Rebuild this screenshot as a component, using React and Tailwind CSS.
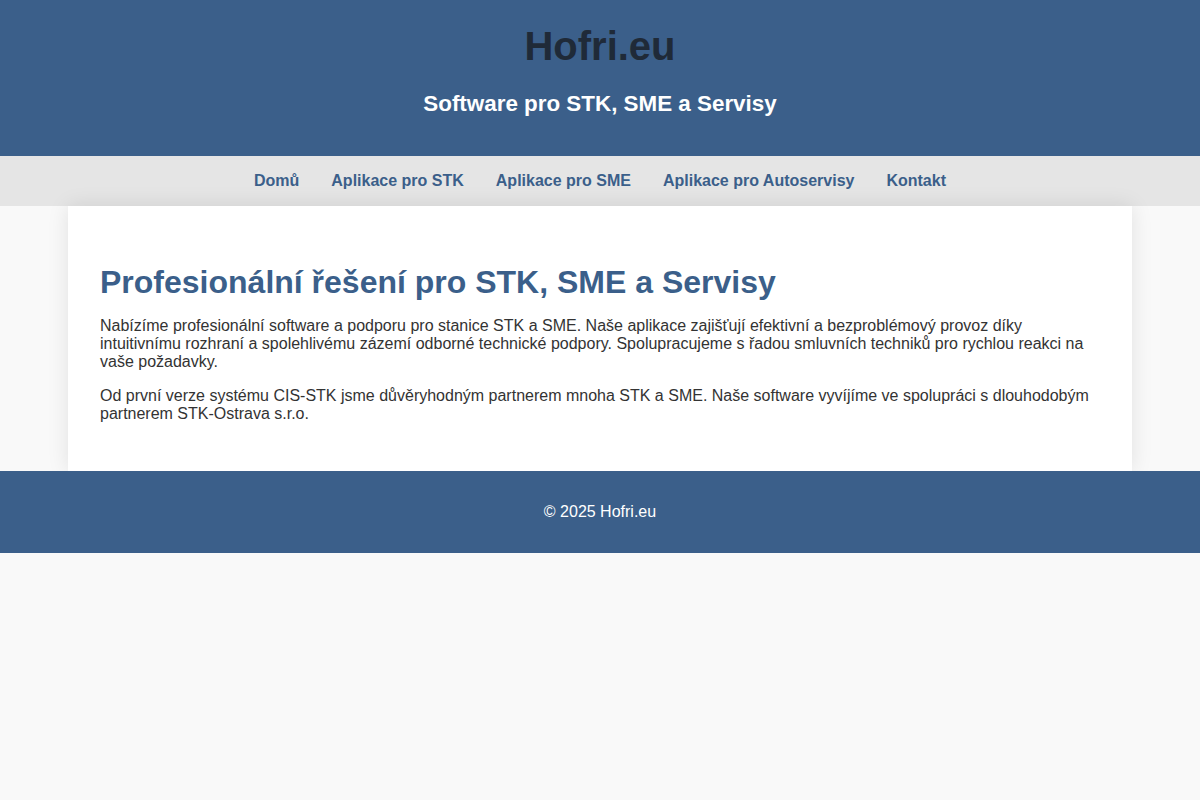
import React from 'react';

const navLinks = ['Domů', 'Aplikace pro STK', 'Aplikace pro SME', 'Aplikace pro Autoservisy', 'Kontakt'];

const App = () => {
  return (
    <div className="min-h-screen bg-[#f9f9f9] text-[#333] font-['Liberation_Sans',Arial,sans-serif]">
      <header className="bg-[#3b5f8a] text-center pt-[22px] pb-[39px]">
        <h1 className="text-[40px] font-bold leading-[48px] text-[#1f2a38]">Hofri.eu</h1>
        <h2 className="mt-[21px] text-[22.4px] font-bold leading-[26px] text-white">Software pro STK, SME a Servisy</h2>
      </header>

      <nav className="bg-[#e5e5e5] h-[50px] flex items-center justify-center">
        {navLinks.map((link) => (
          <a key={link} href="#" className="px-4 text-base font-bold text-[#3b5f8a]">
            {link}
          </a>
        ))}
      </nav>

      <main className="relative max-w-[1064px] mx-auto bg-white px-8 pt-[58px] pb-8 shadow-[0_0_20px_rgba(0,0,0,0.1)]">
        <h2 className="text-[32px] font-bold leading-[37px] text-[#3b5f8a] mb-4">
          Profesionální řešení pro STK, SME a Servisy
        </h2>
        <p className="text-base leading-[18px] mb-4">
          Nabízíme profesionální software a podporu pro stanice STK a SME. Naše aplikace zajišťují efektivní a bezproblémový provoz díky intuitivnímu rozhraní a spolehlivému zázemí odborné technické podpory. Spolupracujeme s řadou smluvních techniků pro rychlou reakci na vaše požadavky.
        </p>
        <p className="text-base leading-[18px] mb-4">
          Od první verze systému CIS-STK jsme důvěryhodným partnerem mnoha STK a SME. Naše software vyvíjíme ve spolupráci s dlouhodobým partnerem STK-Ostrava s.r.o.
        </p>
      </main>

      <footer className="relative bg-[#3b5f8a] text-white text-center py-8 text-base leading-[18px]">
        © 2025 Hofri.eu
      </footer>
    </div>
  );
};

export default App;
